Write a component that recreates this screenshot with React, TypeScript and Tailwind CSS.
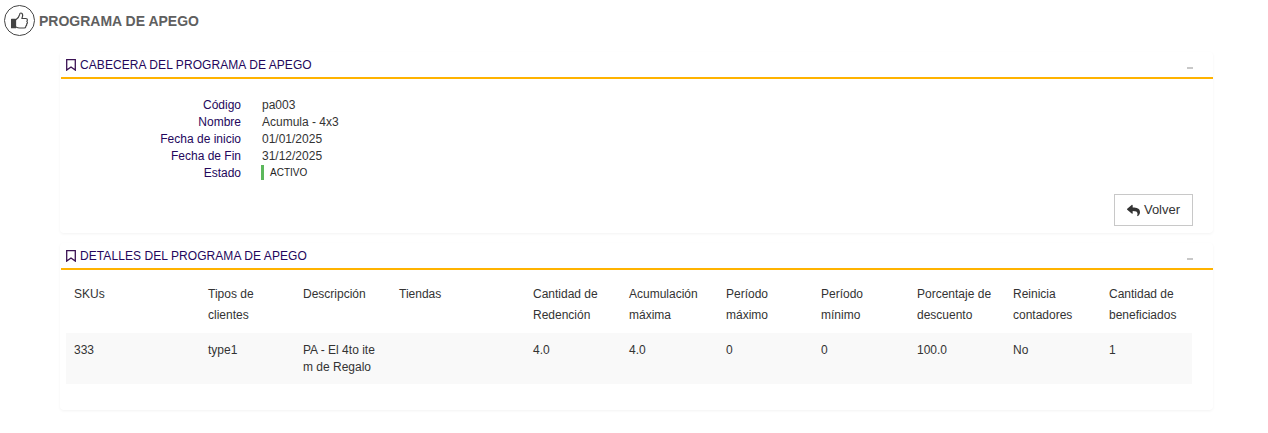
import { FaReply } from 'react-icons/fa'

const info = [
  ['Código', 'pa003'],
  ['Nombre', 'Acumula - 4x3'],
  ['Fecha de inicio', '01/01/2025'],
  ['Fecha de Fin', '31/12/2025'],
]

const columns = [
  { title: ['SKUs'], value: ['333'], width: 'w-[134px]' },
  { title: ['Tipos de', 'clientes'], value: ['type1'], width: 'w-[95px]' },
  { title: ['Descripción'], value: ['PA - El 4to ite', 'm de Regalo'], width: 'w-[96px]' },
  { title: ['Tiendas'], value: [''], width: 'w-[134px]' },
  { title: ['Cantidad de', 'Redención'], value: ['4.0'], width: 'w-[96px]' },
  { title: ['Acumulación', 'máxima'], value: ['4.0'], width: 'w-[97px]' },
  { title: ['Período', 'máximo'], value: ['0'], width: 'w-[95px]' },
  { title: ['Período', 'mínimo'], value: ['0'], width: 'w-[96px]' },
  { title: ['Porcentaje de', 'descuento'], value: ['100.0'], width: 'w-[96px]' },
  { title: ['Reinicia', 'contadores'], value: ['No'], width: 'w-[96px]' },
  { title: ['Cantidad de', 'beneficiados'], value: ['1'], width: 'w-[91px]' },
]

function SectionHeader({ title }: { title: string }) {
  return (
    <div className="ml-[1px] flex h-[27px] items-center justify-between border-b-2 border-[#ffb300] pl-[5px] pr-[20px]">
      <div className="flex items-center gap-[4px] text-[12px] tracking-[0.07px] text-[#24075c]">
        <svg viewBox="0 0 10 12" className="h-[12px] w-[10px]" fill="none" stroke="#3b1254" strokeWidth={1.3}>
          <path d="M.7.7h8.600v10.400L5 8 .7 11.100z" />
        </svg>
        <span>{title}</span>
      </div>
      <div className="mt-[6px] h-[2px] w-[6px] bg-[#c8c8c8]" />
    </div>
  )
}

export default function App() {
  return (
    <div className="h-[433px] w-[1268px] overflow-hidden bg-white font-['Liberation_Sans',sans-serif] text-[12px] text-[#333]">
      <div className="flex items-center gap-[4px] pl-[4px] pt-[5px]">
        <div className="flex h-[31px] w-[31px] items-center justify-center rounded-full border border-[#444]">
          <svg viewBox="0 0 24 24" className="h-[19px] w-[19px]" fill="none" stroke="#444" strokeWidth={1.5} strokeLinejoin="round">
            <rect x="2" y="10.5" width="5" height="10.5" fill="#444" />
            <path d="M7 11.5c2.5-1.5 4.5-4 5-6.500.2-1.300.5-2.500 1.700-2.500 1.600 0 2.300 1.700 2.300 3.300 0 1.200-.6 2.700-1 3.700h5c1.200 0 2 .9 2 2 0 .7-.4 1.200-.8 1.600.5.4.8 1 .8 1.600 0 .8-.5 1.400-1.100 1.700.2.4.3.8.2 1.200-.1.7-.6 1.200-1.200 1.400.1.3.1.7 0 1-.2.9-1 1.500-2 1.500H12c-2 0-3.500-.8-5-1.500" />
          </svg>
        </div>
        <h1 className="mt-[1px] text-[14px] font-bold text-[#5f5f5f]">PROGRAMA DE APEGO</h1>
      </div>

      <div className="ml-[60px] mt-[16px] w-[1153px]">
        <section className="h-[181px] rounded-[4px] shadow-[0_1px_3px_rgba(0,0,0,0.05)]">
          <SectionHeader title="CABECERA DEL PROGRAMA DE APEGO" />
          <div className="mt-[17px] flex flex-col">
            {info.map(([label, value]) => (
              <div key={label} className="flex h-[17px] items-center">
                <div className="w-[181px] text-right text-[#24075c]">{label}</div>
                <div className="ml-[21px]">{value}</div>
              </div>
            ))}
            <div className="flex h-[17px] items-center">
              <div className="w-[181px] text-right text-[#24075c]">Estado</div>
              <div className="ml-[20px] flex items-center gap-[6px]">
                <span className="h-[15px] w-[3px] bg-[#5cb85c]" />
                <span className="text-[10px] text-[#222]">ACTIVO</span>
              </div>
            </div>
          </div>
          <div className="mt-[13px] flex justify-end pr-[20px]">
            <button className="flex h-[32px] w-[79px] items-center justify-center gap-[4px] border border-[#c8c8c8] text-[13px] text-[#333]">
              <FaReply className="h-[13px] w-[13px]" />
              Volver
            </button>
          </div>
        </section>

        <section className="mt-[10px] h-[167px] rounded-[4px] shadow-[0_1px_3px_rgba(0,0,0,0.05)]">
          <SectionHeader title="DETALLES DEL PROGRAMA DE APEGO" />
          <div className="ml-[6px] mt-[13px] flex w-[1126px]">
            {columns.map((col) => (
              <div key={col.title[0] + col.width} className={`${col.width} flex flex-col`}>
                <div className="h-[50px] px-[8px] pt-[1px] leading-[21px]">
                  {col.title.map((t) => (
                    <div key={t}>{t}</div>
                  ))}
                </div>
                <div className="h-[51px] bg-[#f9f9f9] px-[8px] pt-[9px] leading-[17px]">
                  {col.value.map((v) => (
                    <div key={v}>{v}</div>
                  ))}
                </div>
              </div>
            ))}
          </div>
        </section>
      </div>
    </div>
  )
}
